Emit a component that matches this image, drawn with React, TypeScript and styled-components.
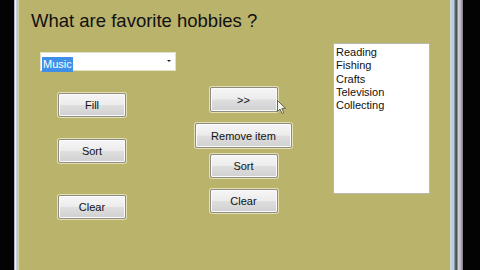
import React from 'react';
import styled, {createGlobalStyle} from 'styled-components';

const hobbies = ['Reading', 'Fishing', 'Crafts', 'Television', 'Collecting'];

const GlobalStyle = createGlobalStyle`
  html, body {
    margin: 0;
    padding: 0;
    background: #000;
    overflow: hidden;
  }
`;

const App = () => {
  return (
    <>
      <GlobalStyle />
      <Screen>
        <BlackGap $w={14} />
        <LeftFrame />
        <Form>
          <Title>What are favorite hobbies ?</Title>
          <Body>
            <LeftCol>
              <Combo>
                <Selected>Music</Selected>
                <Caret />
              </Combo>
              <Button $mt={22} $ml={18}>Fill</Button>
              <Button $mt={22} $ml={18}>Sort</Button>
              <Button $mt={32} $ml={18}>Clear</Button>
            </LeftCol>
            <MiddleCol>
              <Button $h={25}>&gt;&gt;</Button>
              <Button $mt={11} $w={97} $h={25}>Remove item</Button>
              <Button $mt={6}>Sort</Button>
              <Button $mt={11}>Clear</Button>
            </MiddleCol>
            <ListBox>
              {hobbies.map(item => (
                <ListItem key={item}>{item}</ListItem>
              ))}
            </ListBox>
          </Body>
          <Cursor width="10" height="15" viewBox="0 0 10 15">
            <path
              d="M0.5 0.5 L0.5 11.5 L3 9 L5 13.5 L6.8 12.7 L4.8 8.4 L8.5 8.4 Z"
              fill="#f4f4f0"
              stroke="#5a5a48"
              strokeWidth="0.9"
              strokeLinejoin="round"
            />
          </Cursor>
        </Form>
        <RightFrame />
        <BlackGap $w={17} />
      </Screen>
    </>
  );
};
export default App;

const Screen = styled.div`
  display: flex;
  width: 480px;
  height: 270px;
  background: #000;
  font-family: 'Liberation Sans', Arial, sans-serif;
`;

const BlackGap = styled.div<{$w: number}>`
  width: ${({$w}) => $w}px;
  background: #030303;
`;

const LeftFrame = styled.div`
  width: 5px;
  background: linear-gradient(
    to right,
    #6c7480 0px,
    #f4f6fa 1px,
    #e8eef6 2px,
    #a9b6c6 3px,
    #d6d2a8 4px
  );
`;

const RightFrame = styled.div`
  width: 13px;
  background: linear-gradient(
    to right,
    #d9dcc8 0px,
    #c3d2e2 1px,
    #b8cadc 4px,
    #5e6e70 5px,
    #3e4a4c 7px,
    #d8d2dc 8px,
    #b9b4c0 11px,
    #8a8690 12px
  );
`;

const Form = styled.div`
  position: relative;
  flex: 1;
  display: flex;
  flex-direction: column;
  background: #bab36b;
`;

const Title = styled.div`
  height: 33px;
  padding: 10px 0 0 12px;
  font-size: 18.5px;
  line-height: 22px;
  color: #111;
`;

const Body = styled.div`
  display: flex;
  align-items: flex-start;
  padding-left: 21px;
`;

const LeftCol = styled.div`
  width: 155px;
  display: flex;
  flex-direction: column;
  align-items: flex-start;
  padding-top: 9px;
`;

const MiddleCol = styled.div`
  width: 97px;
  display: flex;
  flex-direction: column;
  align-items: center;
  padding-top: 44px;
`;

const Combo = styled.div`
  position: relative;
  width: 136px;
  height: 19px;
  box-sizing: border-box;
  background: #fff;
  border: 1px solid #e4e0c8;
  padding: 1px;
`;

const Selected = styled.span`
  display: inline-block;
  height: 15px;
  line-height: 15px;
  padding: 0 1px;
  background: #3f8ee8;
  color: #fff;
  font-size: 11px;
`;

const Caret = styled.span`
  position: absolute;
  right: 4px;
  top: 7px;
  width: 0;
  height: 0;
  border-left: 2px solid transparent;
  border-right: 2px solid transparent;
  border-top: 2px solid #222;
`;

const Button = styled.button<{$mt?: number; $ml?: number; $w?: number; $h?: number}>`
  margin: ${({$mt}) => $mt ?? 0}px 0 0 ${({$ml}) => $ml ?? 0}px;
  width: ${({$w}) => $w ?? 68}px;
  height: ${({$h}) => $h ?? 24}px;
  padding: 0;
  box-sizing: border-box;
  border: 1px solid #8c8c84;
  border-radius: 2px;
  background: linear-gradient(
    to bottom,
    #f6f6f6 0%,
    #ececec 48%,
    #dedede 52%,
    #d0d0d0 100%
  );
  box-shadow: 0 0 0 1px #e6dfb0, inset 0 0 0 1px #fbfbfb;
  font-family: 'Liberation Sans', Arial, sans-serif;
  font-size: 11px;
  color: #111;
`;

const ListBox = styled.div`
  margin-left: 41px;
  width: 97px;
  height: 151px;
  box-sizing: border-box;
  background: #fff;
  border: 1px solid #b8b8b0;
  padding: 2px 0 0 2px;
`;

const ListItem = styled.div`
  font-size: 11px;
  line-height: 13.3px;
  color: #111;
`;

const Cursor = styled.svg`
  position: absolute;
  left: 258px;
  top: 100px;
`;
